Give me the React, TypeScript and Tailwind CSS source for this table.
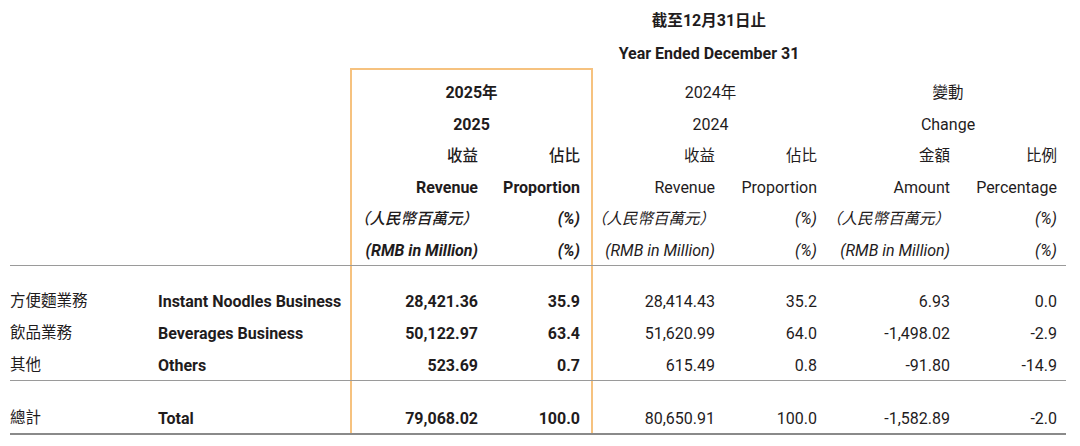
import React from 'react';

type Cell = { t?: React.ReactNode; span?: number; align?: 'l' | 'r' | 'c'; cls?: string };

const grid = 'grid grid-cols-[148px_192px_140px_103px_132px_103px_132px_108px]';
const orange = 'border-[#f6c27f]';
const padR = ['', '', 'pr-[12px]', 'pr-[11px]', 'pr-[10px]', 'pr-[11px]', 'pr-[10px]', 'pr-[11px]'];

function Row({ cells, h = 'h-[32px]', box = true }: { cells: Cell[]; h?: string; box?: boolean }) {
  let col = 0;
  return (
    <div className={`${grid} ${h}`}>
      {cells.map((c, i) => {
        const start = col;
        const span = c.span ?? 1;
        col += span;
        const end = col - 1;
        const boxL = box && start <= 2 && end >= 2 ? `border-l-2 ${orange}` : '';
        const boxR = box && start <= 3 && end >= 3 ? `border-r-2 ${orange}` : '';
        const align =
          c.align === 'c' ? 'justify-center' : c.align === 'l' ? 'justify-start' : `justify-end ${padR[end]}`;
        const spanCls = span === 2 ? 'col-span-2' : span === 6 ? 'col-span-6' : '';
        return (
          <div key={i} className={`flex items-center pt-[3px] whitespace-nowrap ${align} ${boxL} ${boxR} ${spanCls} ${c.cls ?? ''}`}>
            {c.t}
          </div>
        );
      })}
    </div>
  );
}

const empty8: Cell[] = Array.from({ length: 8 }, () => ({ t: '' }));

const it = 'italic';
const cjk = 'text-[15.5px]';
const hdr = 'h-[31.5px]';

const body = [
  ['方便麵業務', 'Instant Noodles Business', '28,421.36', '35.9', '28,414.43', '35.2', '6.93', '0.0'],
  ['飲品業務', 'Beverages Business', '50,122.97', '63.4', '51,620.99', '64.0', '-1,498.02', '-2.9'],
  ['其他', 'Others', '523.69', '0.7', '615.49', '0.8', '-91.80', '-14.9'],
];

function DataRow({ r }: { r: string[] }) {
  return (
    <Row
      cells={[
        { t: r[0], align: 'l', cls: cjk },
        { t: r[1], align: 'l', cls: 'font-bold' },
        { t: r[2], cls: 'font-bold' },
        { t: r[3], cls: 'font-bold' },
        { t: r[4] },
        { t: r[5] },
        { t: r[6] },
        { t: r[7] },
      ]}
    />
  );
}

export default function App() {
  return (
    <div
      className="w-[1080px] h-[446px] bg-white text-[#1f1c1d] text-[16px] leading-none pt-[4px]"
      style={{ fontFamily: 'Roboto, "Noto Sans CJK TC", sans-serif' }}
    >
      <div className="ml-[10px] w-[1058px]">
        <Row
          box={false}
          cells={[{ t: '' }, { t: '' }, { t: <span><span className={cjk}>截至</span>12<span className={cjk}>月</span>31<span className={cjk}>日止</span></span>, span: 6, align: 'c', cls: 'font-bold' }]}
        />
        <Row box={false} cells={[{ t: '' }, { t: '' }, { t: 'Year Ended December 31', span: 6, align: 'c', cls: 'font-bold' }]} />
        <Row
          h="h-[8px]"
          cells={[{ t: '' }, { t: '' }, { t: '', span: 2, cls: `border-t-2 ${orange}` }, { t: '' }, { t: '' }, { t: '' }, { t: '' }]}
        />
        <Row
          h={hdr}
          cells={[
            { t: '' },
            { t: '' },
            { t: <span>2025<span className={cjk}>年</span></span>, span: 2, align: 'c', cls: 'font-bold' },
            { t: <span>2024<span className={cjk}>年</span></span>, span: 2, align: 'c' },
            { t: '變動', span: 2, align: 'c', cls: cjk },
          ]}
        />
        <Row
          h={hdr}
          cells={[
            { t: '' },
            { t: '' },
            { t: '2025', span: 2, align: 'c', cls: 'font-bold' },
            { t: '2024', span: 2, align: 'c' },
            { t: 'Change', span: 2, align: 'c' },
          ]}
        />
        <Row
          h={hdr}
          cells={[
            { t: '' },
            { t: '' },
            { t: '收益', cls: `${cjk} font-[500]` },
            { t: '佔比', cls: `${cjk} font-[500]` },
            { t: '收益', cls: cjk },
            { t: '佔比', cls: cjk },
            { t: '金額', cls: cjk },
            { t: '比例', cls: cjk },
          ]}
        />
        <Row
          h={hdr}
          cells={[
            { t: '' },
            { t: '' },
            { t: 'Revenue', cls: 'font-bold' },
            { t: 'Proportion', cls: 'font-bold' },
            { t: 'Revenue' },
            { t: 'Proportion' },
            { t: 'Amount' },
            { t: 'Percentage' },
          ]}
        />
        <Row
          h={hdr}
          cells={[
            { t: '' },
            { t: '' },
            { t: '（人民幣百萬元）', cls: `${it} ${cjk} font-[500]` },
            { t: '(%)', cls: `${it} font-bold` },
            { t: '（人民幣百萬元）', cls: `${it} ${cjk}` },
            { t: '(%)', cls: it },
            { t: '（人民幣百萬元）', cls: `${it} ${cjk}` },
            { t: '(%)', cls: it },
          ]}
        />
        <Row
          h={hdr}
          cells={[
            { t: '' },
            { t: '' },
            { t: '(RMB in Million)', cls: `${it} font-bold` },
            { t: '(%)', cls: `${it} font-bold` },
            { t: '(RMB in Million)', cls: it },
            { t: '(%)', cls: it },
            { t: '(RMB in Million)', cls: it },
            { t: '(%)', cls: it },
          ]}
        />
        <div className="h-px bg-[#9a9a9a] mr-[2px]" />
        <Row h="h-[18px]" cells={empty8} />
        {body.map((r) => (
          <DataRow key={r[0]} r={r} />
        ))}
        <div className="h-px bg-[#9a9a9a] mr-[2px]" />
        <Row h="h-[20px]" cells={empty8} />
        <DataRow r={['總計', 'Total', '79,068.02', '100.0', '80,650.91', '100.0', '-1,582.89', '-2.0']} />
        <div className="h-[2px] bg-[#8a8a8a] mr-[2px]" />
      </div>
    </div>
  );
}
